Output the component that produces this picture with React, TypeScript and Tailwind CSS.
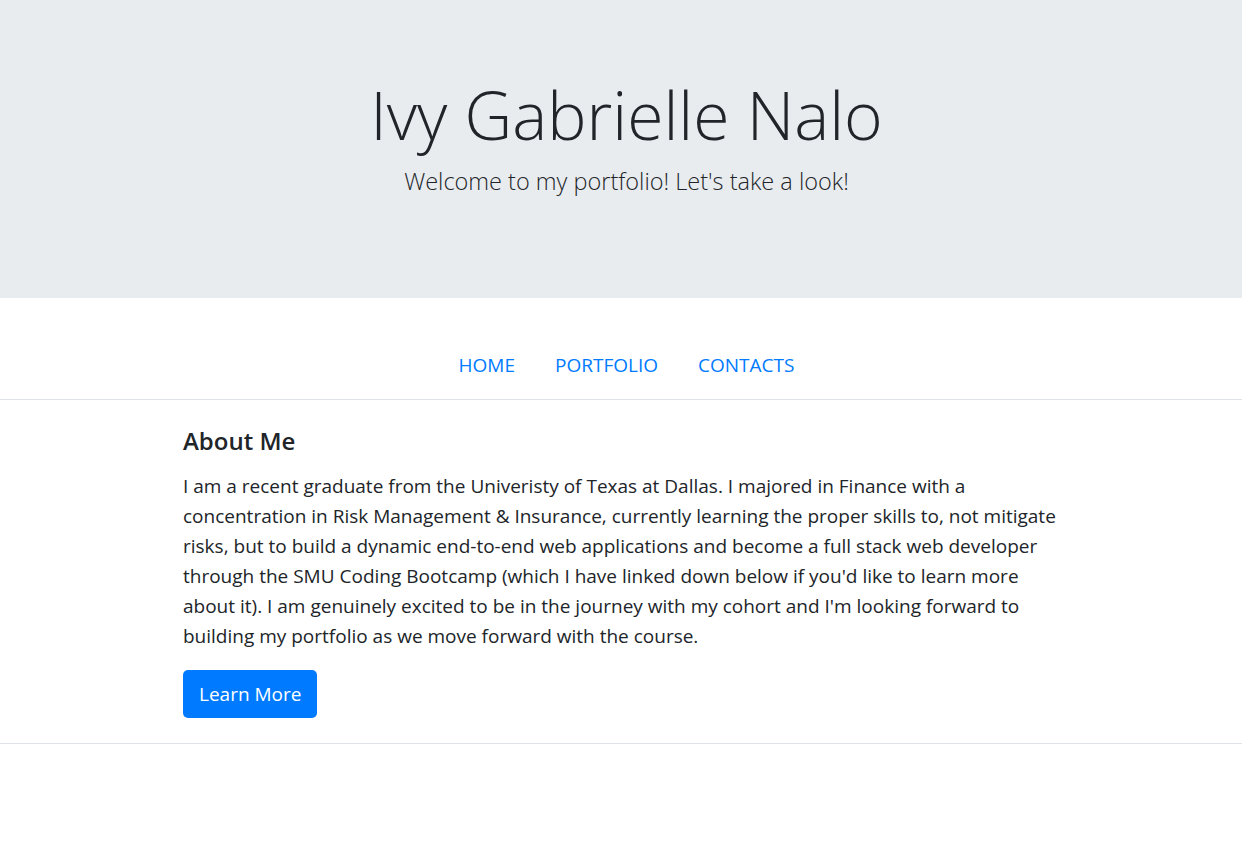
import React from "react";

const navLinks = ["HOME", "PORTFOLIO", "CONTACTS"];

const App = () => {
  return (
    <div className="min-h-[851px] bg-white text-[#212529] font-['Open_Sans',sans-serif]">
      <header className="h-[298px] bg-[#e9ecef] flex flex-col items-center pt-[75px] pl-[11px]">
        <h1 className="text-[66px] font-light leading-[79px]">
          Ivy Gabrielle Nalo
        </h1>
        <p className="mt-[12px] text-[23.5px] font-light leading-[30px]">
          Welcome to my portfolio! Let's take a look!
        </p>
      </header>

      <nav className="flex justify-center pt-[52px] pb-[19px] pl-[11px]">
        {navLinks.map((link) => (
          <a
            key={link}
            href="#"
            className="px-[20px] text-[19px] leading-[30px] text-[#007bff]"
          >
            {link}
          </a>
        ))}
      </nav>

      <hr className="border-t border-[#dee2e6]" />

      <section className="max-w-[876px] mx-auto pt-[26px] pb-[25px]">
        <h2 className="text-[24px] font-semibold leading-[30px] mb-[15px]">
          About Me
        </h2>
        <p className="text-[19px] leading-[30px]">
          I am a recent graduate from the Univeristy of Texas at Dallas. I
          majored in Finance with a concentration in Risk Management &amp;
          Insurance, currently learning the proper skills to, not mitigate
          risks, but to build a dynamic end-to-end web applications and become
          a full stack web developer through the SMU Coding Bootcamp (which I
          have linked down below if you'd like to learn more about it). I am
          genuinely excited to be in the journey with my cohort and I'm looking
          forward to building my portfolio as we move forward with the course.
        </p>
        <button className="mt-[19px] h-[48px] px-[16px] rounded-[5px] bg-[#007bff] text-white text-[19px] leading-[30px]">
          Learn More
        </button>
      </section>

      <hr className="border-t border-[#dee2e6]" />
    </div>
  );
};

export default App;
